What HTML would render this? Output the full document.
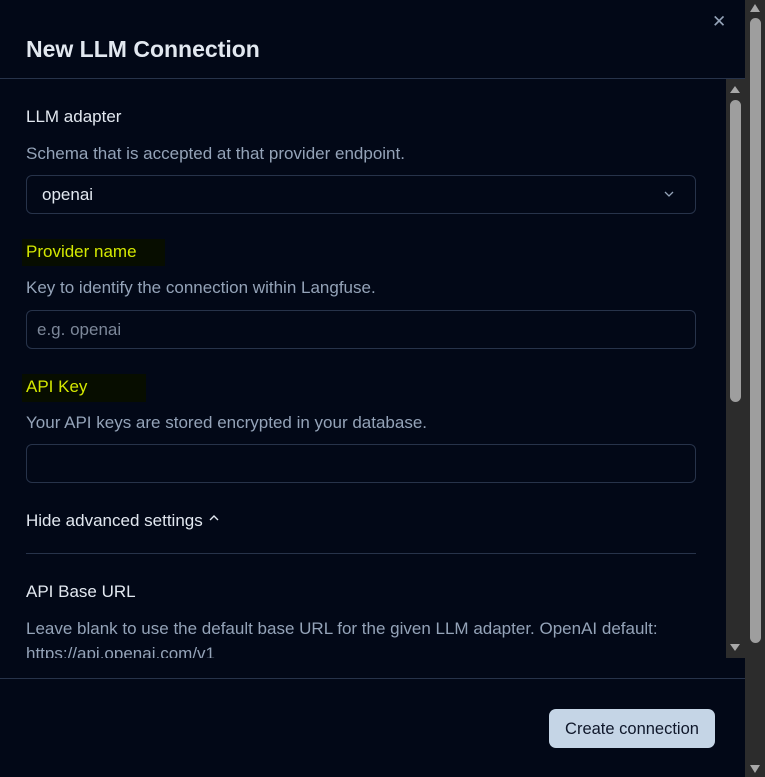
<!DOCTYPE html>
<html><head><style>
body{margin:0;width:765px;height:777px;background:#020817;overflow:hidden;position:relative;font-family:"Liberation Sans",sans-serif;}
.a{position:absolute;white-space:nowrap;line-height:20px;}
.lab{font-size:17px;color:#e2e8f0;}
.desc{font-size:17px;color:#94a3b8;}
.box{position:absolute;left:26px;width:668px;height:37px;border:1px solid #27334a;border-radius:6px;}
</style></head><body>
<div class="a" style="left:26px;top:35px;font-size:23px;font-weight:bold;color:#e2e8f0;line-height:28px">New LLM Connection</div>
<div class="a" style="left:712px;top:12px;font-size:17px;color:#94a3b8">✕</div>
<div style="position:absolute;left:0;top:78px;width:745px;height:1px;background:#27334a"></div>

<div class="a lab" style="left:26px;top:107px">LLM adapter</div>
<div class="a desc" style="left:26px;top:144px">Schema that is accepted at that provider endpoint.</div>
<div class="box" style="top:175px"></div>
<div class="a lab" style="left:42px;top:185px">openai</div>
<svg style="position:absolute;left:663px;top:188px" width="12" height="12" viewBox="0 0 12 12"><path d="M2 4l4 4 4-4" fill="none" stroke="#94a3b8" stroke-width="1.3"/></svg>

<div style="position:absolute;left:22px;top:239px;width:143px;height:27px;background:#070d00"></div>
<div class="a" style="left:26px;top:242px;font-size:17px;color:#d4e800">Provider name</div>
<div class="a desc" style="left:26px;top:278px">Key to identify the connection within Langfuse.</div>
<div class="box" style="top:310px"></div>
<div class="a" style="left:26px;top:320px;padding-left:11px;font-size:17px;color:#7c8799">e.g. openai</div>

<div style="position:absolute;left:22px;top:374px;width:124px;height:28px;background:#070d00"></div>
<div class="a" style="left:26px;top:377px;font-size:17px;color:#d4e800">API Key</div>
<div class="a desc" style="left:26px;top:413px">Your API keys are stored encrypted in your database.</div>
<div class="box" style="top:444px"></div>

<div class="a lab" style="left:26px;top:511px">Hide advanced settings</div>
<svg style="position:absolute;left:207px;top:512px" width="14" height="12" viewBox="0 0 14 12"><path d="M3 8l4-4 4 4" fill="none" stroke="#e2e8f0" stroke-width="1.4"/></svg>
<div style="position:absolute;left:26px;top:553px;width:670px;height:1px;background:#27334a"></div>
<div class="a lab" style="left:26px;top:582px">API Base URL</div>
<div style="position:absolute;left:0;top:600px;width:726px;height:58px;overflow:hidden">
<div class="a desc" style="left:26px;top:16px;line-height:25px;white-space:normal;width:680px">Leave blank to use the default base URL for the given LLM adapter. OpenAI default: https://api.openai.com/v1</div>
</div>

<div style="position:absolute;left:726px;top:79px;width:19px;height:579px;background:#2c2c2c"></div>
<div style="position:absolute;left:730px;top:100px;width:11px;height:302px;background:#9e9e9e;border-radius:6px"></div>
<svg style="position:absolute;left:728px;top:84px" width="14" height="10"><path d="M2 9L7 2L12 9Z" fill="#a8a8a8"/></svg>
<svg style="position:absolute;left:728px;top:643px" width="14" height="10"><path d="M2 1L7 8L12 1Z" fill="#a8a8a8"/></svg>

<div style="position:absolute;left:0;top:678px;width:745px;height:1px;background:#27334a"></div>
<div class="a" style="left:549px;top:709px;width:166px;height:39px;line-height:40px;background:#c5d5e6;border-radius:7px;text-align:center;font-size:16.5px;color:#0f172a">Create connection</div>

<div style="position:absolute;left:745px;top:0;width:20px;height:777px;background:#2c2c2c"></div>
<div style="position:absolute;left:750px;top:18px;width:11px;height:625px;background:#9e9e9e;border-radius:6px"></div>
<svg style="position:absolute;left:748px;top:2px" width="14" height="12"><path d="M2 10L7 2L12 10Z" fill="#a8a8a8"/></svg>
<svg style="position:absolute;left:748px;top:763px" width="14" height="12"><path d="M2 2L7 10L12 2Z" fill="#a8a8a8"/></svg>
</body></html>
